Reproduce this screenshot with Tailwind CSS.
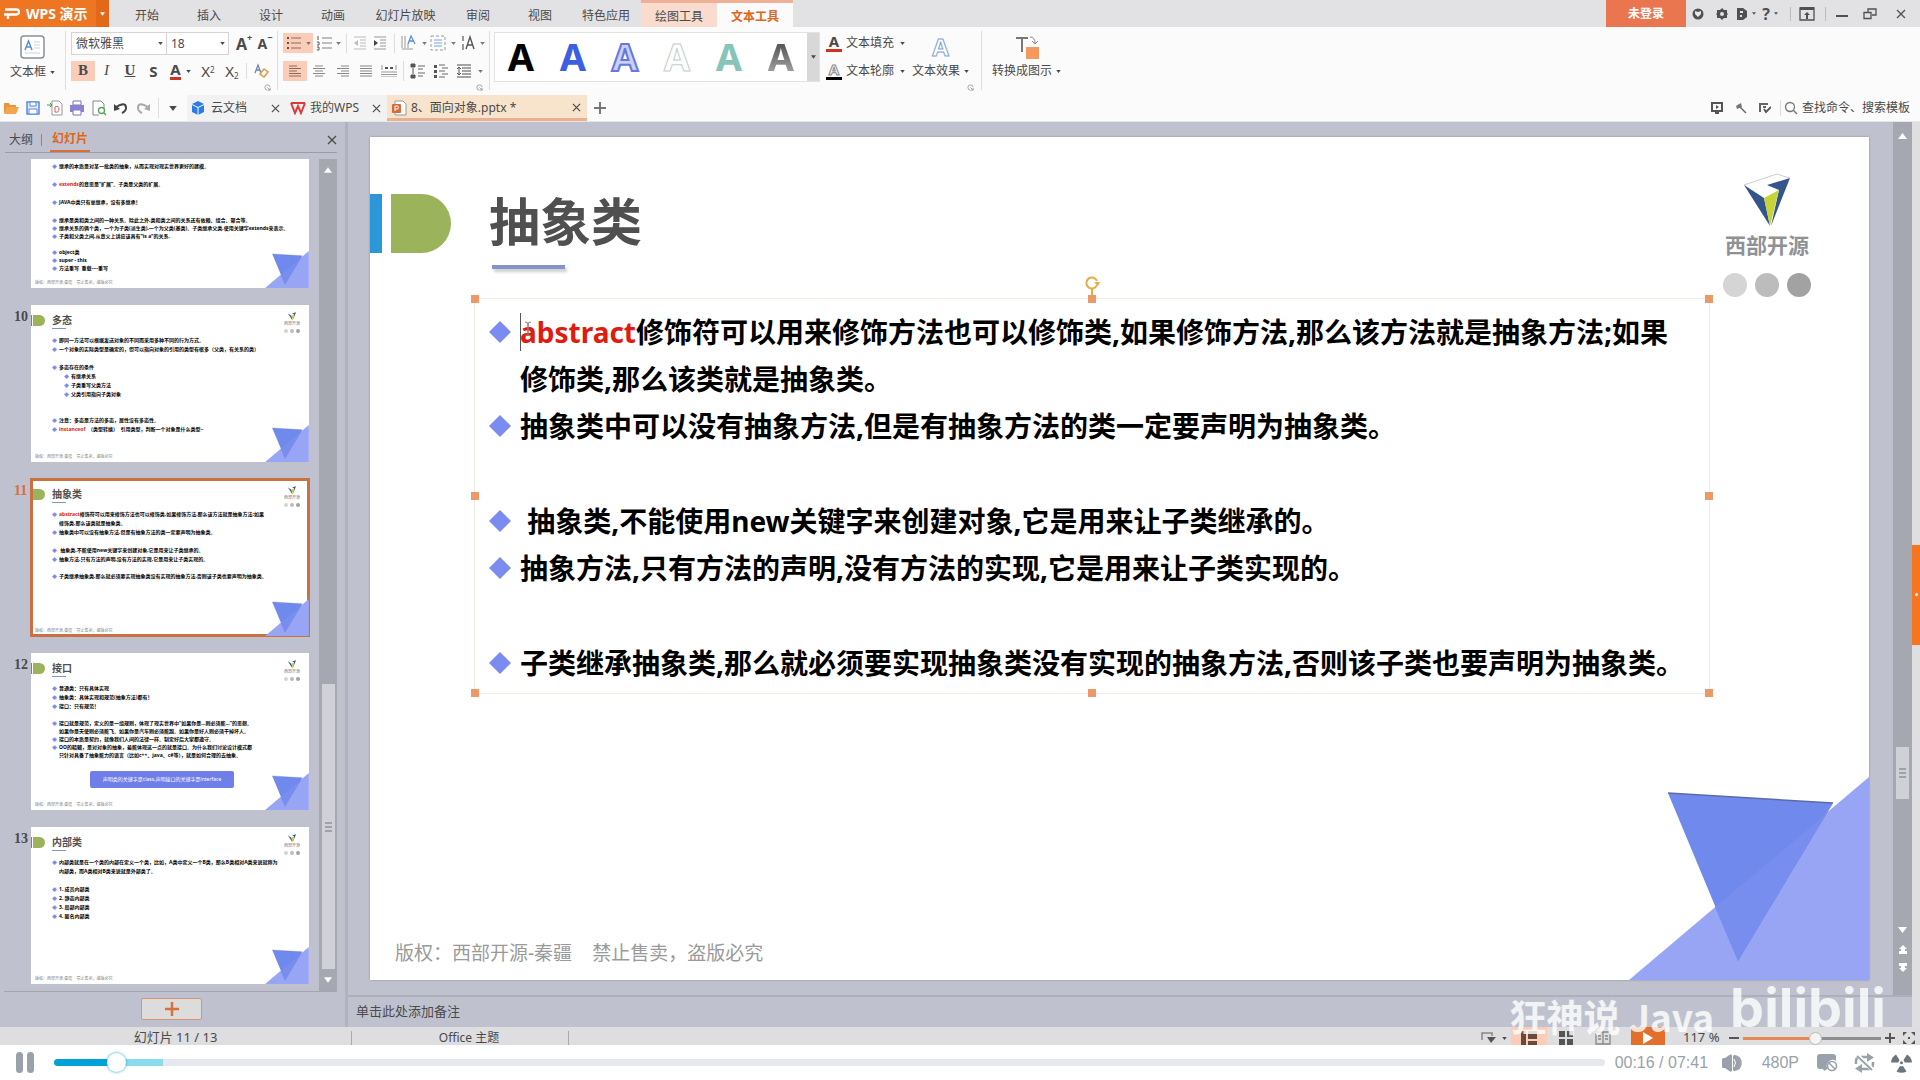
<!DOCTYPE html>
<html lang="zh-CN">
<head>
    <meta charset="UTF-8">
    <meta name="viewport" content="width=device-width, initial-scale=1.0">
    <title>8、面向对象.pptx - WPS 演示</title>
    <script src="https://cdn.jsdelivr.net/npm/@tailwindcss/browser@4"></script>
</head>
<body class="h-screen flex flex-col overflow-hidden bg-white text-xs text-[#4a4a4a] font-['Noto_Sans','Noto_Sans_CJK_SC',sans-serif]">

    <!-- Shared shapes -->
    <svg class="hidden">
        <symbol id="caret" viewBox="0 0 6 4"><path d="M0 0h6L3 4z" fill="currentColor"/></symbol>
        <symbol id="close" viewBox="0 0 10 10"><path d="M1 1l8 8M9 1l-8 8" stroke="currentColor" stroke-width="1.3"/></symbol>
        <symbol id="launcher" viewBox="0 0 8 8"><path d="M7 3.500A3 3 0 1 0 4 7M4 4l3 3M7 4.500V7H4.500" fill="none" stroke="currentColor"/></symbol>
        <symbol id="corner" viewBox="0 0 240 203">
            <path d="M0 203L240 0v203z" fill="#98a4f4"/>
            <path d="M39 16l165 10-95 158z" fill="#6f89ed"/>
            <path d="M86 130L190 43l14-17-95 158z" fill="#788eee"/>
            <path d="M39 16l165 10" stroke="#5c6ba5" stroke-width="1.500"/>
        </symbol>
        <symbol id="logo" viewBox="0 0 46 54">
            <path d="M0 12L33 1l12 4" fill="none" stroke="#c9cdd6" stroke-width="1"/>
            <path d="M0 12l20 13 6 28z" fill="#34558b"/>
            <path d="M46 5L23 12l12 5-8 36z" fill="#34558b"/>
            <path d="M20 25l15-8-9 36z" fill="#c6d437"/>
        </symbol>
    </svg>

    <!-- Title bar -->
    <header class="h-[27px] shrink-0 flex items-stretch bg-[#e2e2e5]">
        <button class="w-[109px] flex items-center bg-[#ee7522] text-white">
            <svg class="ml-1 w-4 h-3" viewBox="0 0 16 12"><path d="M1 1.500h11.500a2.500 2.500 0 0 1 0 5H4V11M0 6.500h5" fill="none" stroke="#fff" stroke-width="2.400"/></svg>
            <span class="ml-[6px] text-sm font-bold whitespace-nowrap">WPS 演示</span>
            <span class="ml-auto h-full w-[13px] flex items-center justify-center bg-[#e2681a]"><svg class="w-[5px] h-1"><use href="#caret"/></svg></span>
        </button>
        <nav class="ml-[7px] flex items-stretch *:flex *:items-center *:justify-center *:pt-1">
            <a href="#" class="w-[62px]">开始</a>
            <a href="#" class="w-[62px]">插入</a>
            <a href="#" class="w-[62px]">设计</a>
            <a href="#" class="w-[62px]">动画</a>
            <a href="#" class="w-[83px]">幻灯片放映</a>
            <a href="#" class="w-[62px]">审阅</a>
            <a href="#" class="w-[62px]">视图</a>
            <a href="#" class="w-[70px]">特色应用</a>
            <a href="#" class="w-[76px] bg-[#f9dccd] border-t-3 border-[#eeb096]">绘图工具</a>
            <a href="#" class="w-[76px] bg-[#fbfbfb] border-t-3 border-[#eeb096] text-[#e0651b] font-bold">文本工具</a>
        </nav>
        <div class="ml-auto flex items-center text-[#505050]">
            <button class="w-20 h-full bg-[#e9764e] text-white font-bold">未登录</button>
            <button class="w-6 flex justify-center" aria-label="皮肤"><svg class="w-3 h-3" viewBox="0 0 12 12"><circle cx="6" cy="6" r="5.500" fill="currentColor"/><path d="M3 3l3 1 3-1v3L6 9 3 6z" fill="#e8e8ea"/></svg></button>
            <button class="w-6 flex justify-center" aria-label="设置"><svg class="w-3 h-3" viewBox="0 0 12 12"><path d="M6 0l2 2h3v3l1 1-1 1v3H8l-2 2-2-2H1V7L0 6l1-1V2h3z" fill="currentColor"/><circle cx="6" cy="6" r="2" fill="#e2e2e5"/></svg></button>
            <button class="w-6 flex items-center justify-center gap-1" aria-label="文档"><svg class="w-3 h-3" viewBox="0 0 12 12"><path d="M1 0h6l4 3v6l-4 3H1zM4 3v2h3V3zM4 7v2h2V7z" fill="currentColor" fill-rule="evenodd"/></svg><svg class="w-1 h-[3px]"><use href="#caret"/></svg></button>
            <button class="w-6 flex items-center justify-center gap-1 text-base font-bold" aria-label="帮助">?<svg class="w-1 h-[3px]"><use href="#caret"/></svg></button>
            <span class="mx-2 h-[14px] w-px bg-[#bbb]"></span>
            <button aria-label="折叠功能区"><svg class="w-4 h-[14px]" viewBox="0 0 16 14"><path d="M1 1h14v12H1z" fill="none" stroke="currentColor" stroke-width="1.300"/><path d="M1 0h14v3H1zM8 5l3 3H9v4H7V8H5z" fill="currentColor"/></svg></button>
            <span class="mx-[10px] h-[14px] w-px bg-[#bbb]"></span>
            <button class="w-3 h-3 flex items-end pb-[3px]" aria-label="最小化"><span class="w-3 h-[2px] bg-[#505050]"></span></button>
            <button class="ml-[15px]" aria-label="还原"><svg class="w-[14px] h-3" viewBox="0 0 14 12"><path d="M1 4.500h7v6H1zM5 4V1h8v6H9" fill="none" stroke="currentColor" stroke-width="1.300"/></svg></button>
            <button class="ml-[19px] mr-[14px]" aria-label="关闭"><svg class="w-[10px] h-[10px]"><use href="#close"/></svg></button>
        </div>
    </header>

    <!-- Ribbon -->
    <section class="h-[68px] shrink-0 flex bg-[#fbfbfb] whitespace-nowrap *:shrink-0">
        <button class="w-[65px] pt-2 flex flex-col items-center gap-1">
            <svg class="w-[26px] h-[25px]" viewBox="0 0 26 25"><rect x="1" y="1" width="23" height="22" rx="3" fill="#fff" stroke="#8b9096" stroke-width="1.500"/><path d="M5 15L8.500 6 12 15M6 12h5" stroke="#5a8fd8" stroke-width="1.500" fill="none"/><path d="M14 7h6M14 10h6M14 13h6M5 18h15" stroke="#cfd3d8"/></svg>
            <span class="flex items-center gap-1">文本框<svg class="w-[5px] h-[3px]"><use href="#caret"/></svg></span>
        </button>
        <div class="mt-1 h-[59px] w-px bg-[#dedede]"></div>

        <div class="w-[211px] pl-[5px] pt-[5px] flex flex-col">
            <div class="flex h-[23px] items-center">
                <label class="relative h-full w-24 flex items-center">
                    <select aria-label="字体" class="appearance-none w-full h-full pl-1 bg-white border border-[#d4d4d4]"><option>微软雅黑</option></select>
                    <svg class="absolute right-1 w-[5px] h-[3px] pointer-events-none"><use href="#caret"/></svg>
                </label>
                <label class="relative h-full w-[62px] flex items-center">
                    <select aria-label="字号" class="appearance-none w-full h-full pl-1 bg-white border border-l-0 border-[#d4d4d4]"><option>18</option></select>
                    <svg class="absolute right-1 w-[5px] h-[3px] pointer-events-none"><use href="#caret"/></svg>
                </label>
                <button class="ml-1 w-[22px] text-base font-bold flex items-start justify-center leading-5" aria-label="增大字号">A<span class="text-[9px] leading-2">+</span></button>
                <button class="w-[20px] text-sm font-bold flex items-start justify-center leading-5" aria-label="减小字号">A<span class="text-[9px] leading-2">−</span></button>
            </div>
            <div class="mt-[6px] flex h-5 items-center text-[15px] font-['Liberation_Serif',serif]">
                <button class="w-6 h-full bg-[#fbcdb9] font-bold">B</button>
                <button class="w-[23px] italic">I</button>
                <button class="w-6 underline font-bold">U</button>
                <button class="w-[23px] font-bold font-['Noto_Sans',sans-serif]">S</button>
                <button class="w-[31px] flex items-center justify-center gap-[5px] font-bold font-['Noto_Sans',sans-serif]"><span class="leading-[15px] border-b-3 border-[#d0321f]">A</span><svg class="w-[5px] h-[3px]"><use href="#caret"/></svg></button>
                <button class="w-6 font-['Noto_Sans',sans-serif] leading-4">X<sup class="text-[8px]">2</sup></button>
                <button class="w-6 font-['Noto_Sans',sans-serif] leading-4">X<sub class="text-[8px]">2</sub></button>
                <span class="h-4 w-px ml-[2px] bg-[#dedede]"></span>
                <button class="ml-[6px]" aria-label="清除格式"><svg class="w-4 h-4" viewBox="0 0 16 16"><path d="M2 10L5 2l3 8M3 7h4" fill="none" stroke="#6a87ad" stroke-width="1.300"/><path d="M7 11l4-5 4 3-4 5z" fill="#fff" stroke="#e39a45" stroke-width="1.500"/></svg></button>
            </div>
            <button class="mt-[3px] mr-[6px] self-end" aria-label="字体设置"><svg class="w-[7px] h-[7px] text-[#999]"><use href="#launcher"/></svg></button>
        </div>
        <div class="mt-1 h-[59px] w-px bg-[#dedede]"></div>

        <div class="w-[211px] pl-[5px] pt-[6px] flex flex-col text-[#777]">
            <div class="flex h-5 items-center">
                <button class="w-[30px] h-full flex items-center justify-center gap-1 bg-[#fbcdb9]" aria-label="项目符号"><svg class="w-4 h-[14px]" viewBox="0 0 16 14"><path d="M5 2h10M5 7h10M5 12h10" stroke="#b08c7c" stroke-width="1.500"/><path d="M1 1h2v2H1zM1 6h2v2H1zM1 11h2v2H1z" fill="#6b5048"/></svg><svg class="w-[5px] h-[3px]"><use href="#caret"/></svg></button>
                <button class="w-[30px] flex items-center justify-center gap-1" aria-label="编号"><svg class="w-4 h-4" viewBox="0 0 16 16"><path d="M6 3h10M6 8h10M6 13h10" stroke="#aaa" stroke-width="1.300"/><path d="M2 1v4M1 7h2v3H1M1 12h2v3H1" stroke="#555" fill="none"/></svg><svg class="w-[5px] h-[3px]"><use href="#caret"/></svg></button>
                <span class="mx-[3px] h-5 w-px bg-[#dedede]"></span>
                <button class="w-5 flex justify-center" aria-label="减少缩进"><svg class="w-[14px] h-[14px]" viewBox="0 0 14 14"><path d="M1 1h12M7 4h6M7 7h6M7 10h6M1 13h12" stroke="#bbb"/><path d="M5 4v6L1 7z" fill="#bbb"/></svg></button>
                <button class="w-5 flex justify-center" aria-label="增加缩进"><svg class="w-[14px] h-[14px]" viewBox="0 0 14 14"><path d="M1 1h12M7 4h6M7 7h6M7 10h6M1 13h12" stroke="#999"/><path d="M1 4v6l4-3z" fill="#444"/></svg></button>
                <span class="mx-1 h-5 w-px bg-[#dedede]"></span>
                <button class="w-[29px] flex items-center justify-center gap-[5px]" aria-label="文字方向"><svg class="w-4 h-4" viewBox="0 0 16 16"><path d="M1 1v12M4 1v12M1 14h11M7 9v4" stroke="#999" fill="none"/><path d="M7 9l3-8 4 8M8 6h5" stroke="#5a8fd8" fill="none" stroke-width="1.300"/></svg><svg class="w-[5px] h-[3px]"><use href="#caret"/></svg></button>
                <button class="w-[30px] flex items-center justify-center gap-[5px]" aria-label="对齐文本"><svg class="w-4 h-4" viewBox="0 0 16 16"><path d="M1 1h14v14H1z" fill="none" stroke="#999" stroke-dasharray="3 2"/><path d="M4 5h8M4 8h8M4 11h8" stroke="#7aa3dc"/></svg><svg class="w-[5px] h-[3px]"><use href="#caret"/></svg></button>
                <button class="w-[30px] flex items-center justify-center gap-[5px]" aria-label="字符间距"><svg class="w-[14px] h-4" viewBox="0 0 14 16"><path d="M2 1v5M2 9v6" stroke="#666" stroke-width="1.300"/><path d="M5 14l4-12 4 12M6 10h6" fill="none" stroke="#555" stroke-width="1.400"/></svg><svg class="w-[5px] h-[3px]"><use href="#caret"/></svg></button>
            </div>
            <div class="mt-2 flex h-5 items-center">
                <button class="w-6 h-full flex items-center justify-center bg-[#fbcdb9]" aria-label="左对齐"><svg class="w-3 h-3" viewBox="0 0 12 12"><path d="M0 1h8M0 3.500h12M0 6h8M0 8.500h12M0 11h12" stroke="#8d6a5b"/></svg></button>
                <button class="w-6 flex justify-center" aria-label="居中"><svg class="w-3 h-3" viewBox="0 0 12 12"><path d="M2 1h8M0 3.500h12M2 6h8M0 8.500h12M2 11h8" stroke="#888"/></svg></button>
                <button class="w-[23px] flex justify-center" aria-label="右对齐"><svg class="w-3 h-3" viewBox="0 0 12 12"><path d="M4 1h8M0 3.500h12M4 6h8M0 8.500h12M4 11h8" stroke="#888"/></svg></button>
                <button class="w-[23px] flex justify-center" aria-label="两端对齐"><svg class="w-3 h-3" viewBox="0 0 12 12"><path d="M0 1h12M0 3.500h12M0 6h12M0 8.500h12M0 11h12" stroke="#888"/></svg></button>
                <button class="w-6 flex justify-center" aria-label="分散对齐"><svg class="w-4 h-3" viewBox="0 0 16 12"><path d="M1 0v5M15 0v5M0 7h16M0 9.500h16M0 12h16" stroke="#999"/><path d="M4 2h3v2H4zM9 2h3v2H9z" fill="#555"/></svg></button>
                <span class="mx-[2px] h-5 w-px bg-[#dedede]"></span>
                <button class="w-[23px] flex justify-center" aria-label="增加段落间距"><svg class="w-4 h-4" viewBox="0 0 16 16"><path d="M1 1h4v3H1zM1 12h4v3H1zM3 5v6" fill="#555" stroke="#555"/><path d="M8 3h7M8 6h5M8 10h7M8 13h5" stroke="#999" stroke-width="1.500"/></svg></button>
                <button class="w-[23px] flex justify-center" aria-label="减少段落间距"><svg class="w-4 h-4" viewBox="0 0 16 16"><path d="M1 2h3v3H1zM1 7h3v3H1zM1 12h3v3H1z" fill="#555"/><path d="M6 2h6M9 5h6M6 8h6M9 11h6M6 14h6" stroke="#999" stroke-width="1.300"/></svg></button>
                <button class="w-[36px] flex items-center justify-center gap-[7px]" aria-label="行距"><svg class="w-[14px] h-[14px]" viewBox="0 0 14 14"><path d="M0 1h14M5 4h9M5 7h9M5 10h9M0 13h14" stroke="#888" stroke-width="1.500"/><path d="M2 3v8M0 5l2-2 2 2M0 9l2 2 2-2" stroke="#555" fill="none"/></svg><svg class="w-[5px] h-[3px]"><use href="#caret"/></svg></button>
            </div>
            <button class="mt-[3px] mr-[6px] self-end" aria-label="段落设置"><svg class="w-[7px] h-[7px] text-[#999]"><use href="#launcher"/></svg></button>
        </div>
        <div class="mt-1 h-[59px] w-px bg-[#dedede]"></div>

        <!-- Text style presets -->
        <div class="ml-1 mt-[5px] h-[50px] flex bg-white border border-[#e2e2e2]">
            <div class="flex items-center pb-[3px] text-[38px] leading-none font-bold *:w-[52px] *:text-center">
                <button class="text-black">A</button>
                <button class="text-[#3b5fe0]">A</button>
                <button class="text-[#c9d0fa] [-webkit-text-stroke:2px_#6677dd]">A</button>
                <button class="text-white [-webkit-text-stroke:1px_#c3cfca]">A</button>
                <button class="text-[#86c5b8]">A</button>
                <button class="text-transparent bg-clip-text bg-linear-to-b from-[#444] to-[#aaa]">A</button>
            </div>
            <button class="w-3 flex items-center justify-center bg-[#d8d8d8]" aria-label="更多样式"><svg class="w-[5px] h-1"><use href="#caret"/></svg></button>
        </div>

        <div class="ml-[6px] pt-[6px] flex flex-col gap-2 *:h-5">
            <button class="flex items-center gap-1"><span class="w-4 text-center text-[15px] leading-[15px] font-bold border-b-3 border-[#d0321f]">A</span>文本填充<svg class="ml-[2px] w-[5px] h-[3px]"><use href="#caret"/></svg></button>
            <button class="flex items-center gap-1"><span class="w-4 text-center text-[15px] leading-[15px] font-bold text-white [-webkit-text-stroke:1px_#888] border-b-3 border-black">A</span>文本轮廓<svg class="ml-[2px] w-[5px] h-[3px]"><use href="#caret"/></svg></button>
        </div>
        <div class="ml-[2px] w-[67px] flex flex-col">
            <button class="pt-[6px] flex flex-col items-center">
                <span class="h-7 text-[24px] leading-7 font-bold text-white [-webkit-text-stroke:1px_#7ea2d8]">A</span>
                <span class="h-5 flex items-center gap-1">文本效果<svg class="w-[5px] h-[3px]"><use href="#caret"/></svg></span>
            </button>
            <button class="mt-[3px] self-end" aria-label="文本效果设置"><svg class="w-[7px] h-[7px] text-[#999]"><use href="#launcher"/></svg></button>
        </div>
        <div class="ml-[7px] mt-1 h-[59px] w-px bg-[#dedede]"></div>
        <button class="ml-[10px] pt-2 flex flex-col items-center">
            <svg class="h-[26px] w-[26px]" viewBox="0 0 26 26"><path d="M2 3h12M8 3v14" stroke="#777" stroke-width="2"/><path d="M16 2q5 0 5 6M18 6l3 3 3-3" stroke="#888" fill="none"/><rect x="12" y="12" width="13" height="12" fill="#f59a5c"/></svg>
            <span class="h-5 flex items-center gap-1">转换成图示<svg class="w-[5px] h-[3px]"><use href="#caret"/></svg></span>
        </button>
    </section>

    <!-- Quick access bar and document tabs -->
    <section class="h-[27px] shrink-0 flex items-stretch bg-[#fbfbfb] border-b border-[#e4e6ea] whitespace-nowrap">
        <div class="flex items-center *:w-[22px] *:flex *:justify-center">
            <button aria-label="打开"><svg class="w-4 h-[14px]" viewBox="0 0 16 14"><path d="M1 12V2h5l1 2h6v3" fill="#e9963a"/><path d="M1 13L4 6h12l-3 7z" fill="#f3a64a"/></svg></button>
            <button aria-label="保存"><svg class="w-[14px] h-[14px]" viewBox="0 0 14 14"><path d="M1 1h12v12H1z" fill="#dfeafb" stroke="#5a8ce0" stroke-width="1.500"/><path d="M4 1h6v4H4zM3 8h8v5H3z" fill="#fff" stroke="#5a8ce0"/></svg></button>
            <button aria-label="输出"><svg class="w-4 h-4" viewBox="0 0 16 16"><path d="M5 1h7l3 3v11H5z" fill="#fff" stroke="#999"/><path d="M8 7q4-2 4 2t-4 3z" fill="none" stroke="#d06060"/><path d="M0 5h5M3 3l2 2-2 2" stroke="#4c9a50" fill="none"/></svg></button>
            <button aria-label="打印"><svg class="w-4 h-4" viewBox="0 0 16 16"><path d="M4 1h8v4H4zM4 10h8v5H4z" fill="#fff" stroke="#7773c0"/><path d="M1 5h14v7h-3v-2H4v2H1z" fill="#8883cc"/></svg></button>
            <button aria-label="打印预览"><svg class="w-4 h-4" viewBox="0 0 16 16"><path d="M13 8V4l-3-3H2v14h6" fill="#fff" stroke="#888"/><circle cx="10.500" cy="10.500" r="3" fill="none" stroke="#55a455" stroke-width="1.300"/><path d="M13 13l2 2" stroke="#55a455" stroke-width="1.500"/></svg></button>
            <button aria-label="撤销"><svg class="w-[14px] h-3" viewBox="0 0 14 12"><path d="M2 5q10-6 10 1 0 3-4 5" fill="none" stroke="#444" stroke-width="2"/><path d="M0 2v7l6-2z" fill="#444"/></svg></button>
            <button aria-label="恢复"><svg class="w-[14px] h-3" viewBox="0 0 14 12"><path d="M12 5Q2-1 2 6q0 3 4 5" fill="none" stroke="#aaa" stroke-width="2"/><path d="M14 2v7L8 7z" fill="#aaa"/></svg></button>
        </div>
        <span class="ml-1 my-[3px] w-px bg-[#dedede]"></span>
        <button class="w-7 flex items-center justify-center" aria-label="更多"><svg class="w-2 h-[5px]"><use href="#caret"/></svg></button>
        <div class="w-[100px] pl-1 flex items-center gap-[6px] bg-[#f2f2f2]">
            <svg class="w-[14px] h-[14px]" viewBox="0 0 14 14"><path d="M7 0l6 3v8l-6 3-6-3V3z" fill="#2d7be8"/><path d="M1 3.500l6 3 6-3M7 6.500V14" stroke="#fff" fill="none"/></svg>
            <a href="#">云文档</a>
            <button class="ml-auto mr-[7px]" aria-label="关闭云文档"><svg class="w-[9px] h-[9px]"><use href="#close"/></svg></button>
        </div>
        <div class="w-[100px] pl-[3px] flex items-center gap-1 bg-[#f2f2f2]">
            <svg class="w-4 h-[14px]" viewBox="0 0 16 14"><path d="M1 2h14M1 2l4 10 3-7 3 7 4-10" fill="none" stroke="#dc3b3b" stroke-width="2"/></svg>
            <a href="#">我的WPS</a>
            <button class="ml-auto mr-[6px]" aria-label="关闭我的WPS"><svg class="w-[9px] h-[9px]"><use href="#close"/></svg></button>
        </div>
        <div class="w-[200px] pl-1 pt-[2px] flex items-center gap-1 bg-[#f8e3cd] border-b-3 border-[#eab08f]">
            <svg class="w-4 h-4" viewBox="0 0 16 16"><path d="M4 1h8l3 3v11H4z" fill="#fff" stroke="#999"/><rect x="1" y="4" width="9" height="9" rx="1" fill="#d8693a"/><path d="M4 11V6h2a1.500 1.500 0 0 1 0 3H4" stroke="#fff" fill="none"/></svg>
            <a href="#">8、面向对象.pptx *</a>
            <button class="ml-auto mr-[6px]" aria-label="关闭文档"><svg class="w-[9px] h-[9px]"><use href="#close"/></svg></button>
        </div>
        <button class="w-[26px] flex items-center justify-center" aria-label="新建标签"><svg class="w-3 h-3" viewBox="0 0 12 12"><path d="M6 0v12M0 6h12" stroke="#777" stroke-width="2"/></svg></button>

        <div class="ml-auto pr-2 flex items-center">
            <button class="w-6 flex justify-center" aria-label="演示"><svg class="w-3 h-3" viewBox="0 0 12 12"><path d="M1 1h10v8H1z" fill="none" stroke="#555" stroke-width="2"/><path d="M5 3l3 2-3 2zM4 10h4v2H4z" fill="#555"/></svg></button>
            <button class="w-6 flex justify-center" aria-label="美化"><svg class="w-3 h-3" viewBox="0 0 12 12"><path d="M3 3l8 8" stroke="#666" stroke-width="1.500"/><path d="M1 4l5-3 1 4-5 2z" fill="#777"/></svg></button>
            <button class="w-6 flex justify-center" aria-label="批注"><svg class="w-3 h-3" viewBox="0 0 12 12"><path d="M0 2h9M1 2v8M4 5h3" stroke="#666" stroke-width="2"/><path d="M5 7l2 3 5-5" stroke="#555" stroke-width="1.800" fill="none"/></svg></button>
            <span class="mx-[3px] h-4 w-px bg-[#dedede]"></span>
            <label for="search" class="mr-1"><svg class="w-[14px] h-[14px]" viewBox="0 0 14 14"><circle cx="6" cy="6" r="4.500" fill="none" stroke="#777" stroke-width="1.300"/><path d="M9 9l4 4" stroke="#777" stroke-width="1.500"/></svg></label>
            <input id="search" type="text" aria-label="查找命令" placeholder="查找命令、搜索模板" class="w-[110px] outline-none placeholder:text-[#4a4a4a]">
        </div>
    </section>

    <main class="relative flex-1 min-h-0 flex bg-[#bfc2ce]">
        <!-- Slide thumbnails -->
        <aside class="w-[348px] shrink-0 flex flex-col border-r-3 border-[#b0b3be]">
            <div class="ml-[5px] mr-2 h-[31px] shrink-0 flex items-center pt-[6px] border-b border-[#9a9da8]">
                <a href="#" class="pl-1">大纲</a>
                <span class="mx-2 h-3 w-px bg-[#888]"></span>
                <a href="#" class="h-full px-[2px] flex items-center border-b-2 border-[#dd6d35] text-[#e0651b] font-bold">幻灯片</a>
                <button class="ml-auto" aria-label="关闭窗格"><svg class="w-[10px] h-[10px]"><use href="#close"/></svg></button>
            </div>
            <div class="mt-[6px] mr-2 ml-1 flex-1 min-h-0 flex border-b border-[#a3a6b1]">
                <ol id="thumbs" class="flex-1 min-w-0 overflow-hidden flex flex-col justify-end gap-[17px] pb-[7px]"></ol>
                <div class="w-[18px] shrink-0 flex flex-col items-center py-2 bg-[#a6a8b1] text-white">
                    <svg class="w-2 h-[6px] rotate-180 shrink-0"><use href="#caret"/></svg>
                    <div class="mt-auto mb-2 w-[13px] h-[285px] flex flex-col items-center justify-center gap-[2px] bg-[#cfd1d7] *:w-[7px] *:h-[2px] *:bg-[#a0a2aa]"><i></i><i></i><i></i></div>
                    <svg class="w-2 h-[6px] shrink-0"><use href="#caret"/></svg>
                </div>
            </div>
            <div class="h-[35px] shrink-0 pt-[6px] pr-[2px] flex items-start justify-center">
                <button class="w-[61px] h-[22px] flex items-center justify-center bg-[#dcdcdd] border border-[#d9936f] rounded-xs" aria-label="新建幻灯片"><svg class="w-[14px] h-[14px]" viewBox="0 0 14 14"><path d="M7 0v14M0 7h14" stroke="#d5703f" stroke-width="2.500"/></svg></button>
            </div>
        </aside>

        <div class="flex-1 min-w-0 flex flex-col">
            <div class="flex-1 min-h-0 flex border-b-2 border-[#adb0bb]">
                <div class="flex-1 min-w-0 pt-[15px] pl-[22px] pr-6 pb-[15px] flex">
                    <!-- Current slide -->
                    <article class="relative flex-1 flex flex-col bg-white shadow-[0_0_2px_#888a95]">
                        <header class="h-[161px] flex items-start">
                            <div class="mt-[57px] w-3 h-[59px] bg-[#2b97d9]"></div>
                            <div class="mt-[57px] ml-[9px] w-[60px] h-[59px] rounded-r-full bg-[#9bb35b]"></div>
                            <div class="mt-[57px] ml-[38px]">
                                <h1 class="h-[59px] text-[51px] leading-[54px] font-bold text-[#505050]">抽象类</h1>
                                <div class="mt-3 ml-[3px] w-[73px] h-1 bg-[#8095c8] shadow-[2px_3px_3px_#0003]"></div>
                            </div>
                            <div class="ml-auto mr-[58px] pt-9 flex flex-col items-center">
                                <svg class="w-[46px] h-[54px]"><use href="#logo"/></svg>
                                <span class="mt-[6px] text-[21px] leading-6 font-bold text-[#8f9295]">西部开源</span>
                                <div class="mt-4 flex gap-2 *:w-6 *:h-6 *:rounded-full"><i class="bg-[#d5d5d5]"></i><i class="bg-[#bcbcbc]"></i><i class="bg-[#a2a2a2]"></i></div>
                            </div>
                        </header>
                        <div class="relative ml-[104px] mr-[159px] pt-[10px] pb-[6px] pl-[14px] pr-5 border border-[#f8e9de] text-[28px] leading-[47px] font-bold text-black">
                            <ul>
                                <li class="flex gap-[9px]"><svg class="mt-3 w-[22px] h-[22px] shrink-0" viewBox="0 0 22 22"><path d="M11 0l11 11-11 11L0 11z" fill="#7b8cf0"/></svg><p><span class="text-[#e01b10]">abstract</span>修饰符可以用来修饰方法也可以修饰类,如果修饰方法,那么该方法就是抽象方法;如果修饰类,那么该类就是抽象类。</p></li>
                                <li class="flex gap-[9px] mb-12"><svg class="mt-3 w-[22px] h-[22px] shrink-0" viewBox="0 0 22 22"><path d="M11 0l11 11-11 11L0 11z" fill="#7b8cf0"/></svg><p>抽象类中可以没有抽象方法,但是有抽象方法的类一定要声明为抽象类。</p></li>
                                <li class="flex gap-[9px]"><svg class="mt-3 w-[22px] h-[22px] shrink-0" viewBox="0 0 22 22"><path d="M11 0l11 11-11 11L0 11z" fill="#7b8cf0"/></svg><p>&nbsp;抽象类,不能使用new关键字来创建对象,它是用来让子类继承的。</p></li>
                                <li class="flex gap-[9px] mb-12"><svg class="mt-3 w-[22px] h-[22px] shrink-0" viewBox="0 0 22 22"><path d="M11 0l11 11-11 11L0 11z" fill="#7b8cf0"/></svg><p>抽象方法,只有方法的声明,没有方法的实现,它是用来让子类实现的。</p></li>
                                <li class="flex gap-[9px]"><svg class="mt-3 w-[22px] h-[22px] shrink-0" viewBox="0 0 22 22"><path d="M11 0l11 11-11 11L0 11z" fill="#7b8cf0"/></svg><p>子类继承抽象类,那么就必须要实现抽象类没有实现的抽象方法,否则该子类也要声明为抽象类。</p></li>
                            </ul>
                            <!-- Caret, pointer and selection handles -->
                            <i class="absolute left-[45px] top-[14px] w-px h-[38px] bg-[#555]"></i>
                            <svg class="absolute left-[49px] top-[22px] w-2 h-4" viewBox="0 0 8 16"><path d="M1 1q3 0 3 2v10q0 2-3 2M7 1Q4 1 4 3v10q0 2 3 2" fill="none" stroke="#8a7a78"/></svg>
                            <i class="absolute -left-1 -top-1 size-2 bg-[#ec9867]"></i>
                            <i class="absolute left-1/2 -top-1 size-2 -translate-x-1/2 bg-[#ec9867]"></i>
                            <i class="absolute -right-1 -top-1 size-2 bg-[#ec9867]"></i>
                            <i class="absolute -left-1 top-1/2 size-2 -translate-y-1/2 bg-[#ec9867]"></i>
                            <i class="absolute -right-1 top-1/2 size-2 -translate-y-1/2 bg-[#ec9867]"></i>
                            <i class="absolute -left-1 -bottom-1 size-2 bg-[#ec9867]"></i>
                            <i class="absolute left-1/2 -bottom-1 size-2 -translate-x-1/2 bg-[#ec9867]"></i>
                            <i class="absolute -right-1 -bottom-1 size-2 bg-[#ec9867]"></i>
                            <svg class="absolute left-1/2 -top-6 w-4 h-5 -translate-x-1/2" viewBox="0 0 16 20"><path d="M13 10a5.500 5.500 0 1 1 0-4M8 14v6" fill="none" stroke="#e5ac45" stroke-width="2"/><path d="M10 7h6l-2 4z" fill="#e5ac45"/></svg>
                        </div>
                        <footer class="mt-auto pl-[25px] pb-[14px] flex gap-5 text-[19px] leading-[26px] text-[#9a9a9a]">
                            <span>版权：西部开源-秦疆</span><span>禁止售卖，盗版必究</span>
                        </footer>
                        <svg class="absolute right-0 bottom-0 w-60 h-[203px]"><use href="#corner"/></svg>
                    </article>
                </div>
                <div class="w-[19px] pt-[11px] pb-[23px] flex flex-col items-center bg-[#a6a8b1] text-white">
                    <svg class="w-[9px] h-[6px] rotate-180 shrink-0"><use href="#caret"/></svg>
                    <div class="mt-auto mb-[128px] w-[13px] h-[52px] flex flex-col items-center justify-center gap-[2px] bg-[#cfd1d7] *:w-[7px] *:h-[2px] *:bg-[#a0a2aa]"><i></i><i></i><i></i></div>
                    <svg class="w-[9px] h-[6px] shrink-0"><use href="#caret"/></svg>
                    <svg class="mt-3 w-2 h-[9px] shrink-0" viewBox="0 0 8 9"><path d="M4 0l4 4H6v2h2v3H0V6h2V4H0z" fill="#fff"/></svg>
                    <svg class="mt-[9px] w-2 h-[9px] shrink-0" viewBox="0 0 8 9"><path d="M4 9l4-4H6V3h2V0H0v3h2v2H0z" fill="#fff"/></svg>
                </div>
            </div>
            <div class="h-[30px] shrink-0 flex items-center pl-2">
                <input type="text" aria-label="备注" placeholder="单击此处添加备注" class="flex-1 outline-none placeholder:text-[#4a4a4a] text-[13px]">
            </div>
        </div>
        <div class="w-2 shrink-0 bg-[#dfdfe2] flex flex-col justify-center">
            <button class="mt-10 h-[100px] w-2 flex items-center justify-center bg-[#f9741f]" aria-label="展开任务窗格"><i class="size-[3px] rounded-full bg-white"></i></button>
        </div>

        <!-- Video watermark -->
        <div class="absolute right-[34px] -bottom-2 z-10 flex items-end gap-4 leading-none text-white/80 pointer-events-none">
            <span class="text-[37px] font-bold font-['Noto_Sans_CJK_SC',sans-serif]">狂神说 Java</span>
            <span class="text-[54px] font-bold font-['Inter',sans-serif]">bilibili</span>
        </div>
    </main>

    <!-- Status bar -->
    <div class="h-[18px] shrink-0 overflow-hidden flex items-start bg-[#dedddf] whitespace-nowrap text-[13px]">
        <div class="h-[22px] w-full flex items-center">
            <span class="w-[351px] shrink-0 text-center">幻灯片 11 / 13</span>
            <span class="h-[14px] w-px bg-[#aaa]"></span>
            <span class="w-[216px] pl-[18px] text-center text-xs">Office 主题</span>
            <span class="h-[14px] w-px bg-[#aaa]"></span>
            <div class="ml-auto flex items-center">
                <button class="w-[30px] flex items-center gap-[5px]" aria-label="备注视图"><svg class="w-4 h-3" viewBox="0 0 16 12"><path d="M1 8V1h10v3" fill="none" stroke="#888" stroke-width="1.500"/><path d="M6 5h9l-5 6z" fill="#555"/></svg><svg class="w-[5px] h-[3px]"><use href="#caret"/></svg></button>
                <button class="w-9 h-[22px] flex items-center justify-center bg-[#fbcdb9]" aria-label="普通视图"><svg class="w-4 h-[14px]" viewBox="0 0 16 14"><path d="M0 0h5v14H0zM7 0h9v8H7zM7 10h9v4H7z" fill="#6b4a3e"/></svg></button>
                <button class="w-[38px] flex justify-center" aria-label="幻灯片浏览"><svg class="w-[14px] h-[14px]" viewBox="0 0 14 14"><path d="M0 0h6v6H0zM8 0h6v6H8zM0 8h6v6H0zM8 8h6v6H8z" fill="#555"/></svg></button>
                <button class="w-9 flex justify-center" aria-label="阅读视图"><svg class="w-4 h-[14px]" viewBox="0 0 16 14"><path d="M1 1h14v12H1zM8 1v12M3 5h3M10 5h3M3 8h3M10 8h3" fill="none" stroke="#888" stroke-width="1.300"/></svg></button>
                <button class="ml-[10px] w-[34px] h-[22px] flex items-center justify-center bg-[#e2702a]" aria-label="放映"><svg class="w-[10px] h-3" viewBox="0 0 10 12"><path d="M0 0l10 6-10 6z" fill="#fff"/></svg></button>
                <span class="w-[64px] pl-[18px]">117 %</span>
                <button class="w-[10px] h-[2px] bg-[#555]" aria-label="缩小"></button>
                <input type="range" aria-label="显示比例" min="0" max="100" value="53" class="ml-1 w-[138px] h-[3px] appearance-none bg-[linear-gradient(90deg,#e58a55_53%,#8d8d8d_53%)] [&::-webkit-slider-thumb]:appearance-none [&::-webkit-slider-thumb]:size-[13px] [&::-webkit-slider-thumb]:rounded-full [&::-webkit-slider-thumb]:bg-[#f4f4f4] [&::-webkit-slider-thumb]:border [&::-webkit-slider-thumb]:border-[#bbb]">
                <button class="ml-1" aria-label="放大"><svg class="w-[10px] h-[10px]" viewBox="0 0 10 10"><path d="M5 0v10M0 5h10" stroke="#555" stroke-width="2"/></svg></button>
                <button class="ml-2 mr-[5px]" aria-label="适应窗口"><svg class="w-3 h-3" viewBox="0 0 12 12"><path d="M0 0h4L0 4zM12 0v4L8 0zM0 12V8l4 4zM12 12H8l4-4zM5 5h2v2H5z" fill="#555"/></svg></button>
            </div>
        </div>
    </div>

    <!-- Video player controls -->
    <div class="h-[35px] shrink-0 flex items-center bg-white text-[#99a2aa] text-base font-['Liberation_Sans',sans-serif]">
        <button class="ml-4 flex gap-1" aria-label="暂停"><i class="w-[7px] h-[21px] rounded-full bg-[#99a2aa]"></i><i class="w-[7px] h-[21px] rounded-full bg-[#99a2aa]"></i></button>
        <input type="range" aria-label="播放进度" min="0" max="461" value="16" class="ml-5 flex-1 min-w-0 h-[7px] rounded-full appearance-none bg-[linear-gradient(90deg,#00a1d6_4%,#8adced_4%,#8adced_7%,#e5e9ef_7%)] [&::-webkit-slider-thumb]:appearance-none [&::-webkit-slider-thumb]:size-[19px] [&::-webkit-slider-thumb]:rounded-full [&::-webkit-slider-thumb]:bg-white [&::-webkit-slider-thumb]:shadow-[0_0_3px_#00a1d6]">
        <span class="ml-[10px] w-[92px] whitespace-nowrap">00:16 / 07:41</span>
        <button class="ml-[15px]" aria-label="音量"><svg class="w-5 h-[18px]" viewBox="0 0 20 18"><path d="M0 5q0-1 2-1h1l5-3.500q2-.500 2 1v15q0 1.500-2 1L3 14H2q-2 0-2-1z" fill="#99a2aa"/><path d="M11 1.500a7.500 7.500 0 0 1 0 15z" fill="#99a2aa"/><path d="M12 5q3 4 0 8" fill="none" stroke="#fff"/><path d="M12 1.500q7 1 7 7.500t-7 7.500" fill="none" stroke="#99a2aa" stroke-width="1.500"/></svg></button>
        <button class="ml-5">480P</button>
        <button class="ml-[18px]" aria-label="关闭弹幕"><svg class="w-[21px] h-5" viewBox="0 0 21 20"><path d="M3 1h13q3 0 3 3v4a6 6 0 0 0-8.500 8L7 18l-1-2H3q-3 0-3-3V4q0-3 3-3z" fill="#99a2aa"/><circle cx="15" cy="13" r="4.500" fill="#fff" stroke="#99a2aa" stroke-width="1.600"/><path d="M12 10l6 6" stroke="#99a2aa" stroke-width="1.600"/></svg></button>
        <button class="ml-4" aria-label="循环播放"><svg class="w-[21px] h-5" viewBox="0 0 21 20"><path d="M2 11V8q0-4 5-4h7M19 9v2q0 5-5 5H7" fill="none" stroke="#99a2aa" stroke-width="2.600"/><path d="M13 0l7 4.500L13 9zM8 11v9l-7-4.500z" fill="#99a2aa"/><path d="M3 2l16 15" stroke="#fff" stroke-width="4"/><path d="M3 3l15 14" stroke="#99a2aa" stroke-width="1.800"/></svg></button>
        <button class="ml-4 mr-2" aria-label="宽屏"><svg class="w-[21px] h-5" viewBox="0 0 21 20"><path d="M5 1.500l3.500 5.500q-1 1-1 2.500H0Q.500 4 5 1.500zM16 1.500L12.500 7q1 1 1 2.500H21Q20.500 4 16 1.500zM9 13q1.500.700 3 0l3.500 5.500q-5 2.500-10 0z" fill="#6d757a"/><circle cx="10.500" cy="9.800" r="1.500" fill="#6d757a"/></svg></button>
    </div>

    <script>
        // t: text, gap: blank space after the line, sub: nested bullet, red: coloured keyword in front
        // the first slide is scrolled half out of view, so it has no number or title
        const slides = [
            { no: '', title: '', tight: true, lines: [
                { t: '继承的本质是对某一批类的抽象，从而实现对现实世界更好的建模。', gap: 10 },
                { red: 'extends', t: '的意思是“扩展”。子类是父类的扩展。', gap: 10 },
                { t: 'JAVA中类只有单继承，没有多继承！', gap: 10 },
                { t: '继承是类和类之间的一种关系。除此之外,类和类之间的关系还有依赖、组合、聚合等。' },
                { t: '继承关系的俩个类，一个为子类(派生类),一个为父类(基类)。子类继承父类,使用关键字extends来表示。' },
                { t: '子类和父类之间,从意义上讲应该具有"is a"的关系.', gap: 8 },
                { t: 'object类' },
                { t: 'super - this' },
                { t: '方法重写  重载----重写' }
            ] },
            { no: 10, title: '多态', lines: [
                { t: '即同一方法可以根据发送对象的不同而采用多种不同的行为方式。' },
                { t: '一个对象的实际类型是确定的，但可以指向对象的引用的类型有很多（父类，有关系的类）', gap: 9 },
                { t: '多态存在的条件' },
                { t: '有继承关系', sub: true },
                { t: '子类重写父类方法', sub: true },
                { t: '父类引用指向子类对象', sub: true, gap: 17 },
                { t: '注意：多态是方法的多态，属性没有多态性。' },
                { red: 'instanceof', t: '  （类型转换）  引用类型，判断一个对象是什么类型~' }
            ] },
            { no: 11, title: '抽象类', active: true, lines: [
                { red: 'abstract', t: '修饰符可以用来修饰方法也可以修饰类,如果修饰方法,那么该方法就是抽象方法;如果\n修饰类,那么该类就是抽象类。' },
                { t: '抽象类中可以没有抽象方法,但是有抽象方法的类一定要声明为抽象类。', gap: 9 },
                { t: ' 抽象类,不能使用new关键字来创建对象,它是用来让子类继承的。' },
                { t: '抽象方法,只有方法的声明,没有方法的实现,它是用来让子类实现的。', gap: 8 },
                { t: '子类继承抽象类,那么就必须要实现抽象类没有实现的抽象方法,否则该子类也要声明为抽象类。' }
            ] },
            { no: 12, title: '接口', tight: true, note: '声明类的关键字是class,声明接口的关键字是interface', lines: [
                { t: '普通类：只有具体实现', gap: 1 },
                { t: '抽象类：具体实现和规范(抽象方法)都有！', gap: 1 },
                { t: '接口：只有规范！', gap: 9 },
                { t: '接口就是规范，定义的是一组规则，体现了现实世界中“如果你是…则必须能…”的思想。\n如果你是天使则必须能飞。如果你是汽车则必须能跑。如果你是好人则必须干掉坏人。' },
                { t: '接口的本质是契约，就像我们人间的法律一样。制定好后大家都遵守。' },
                { t: 'OO的精髓，是对对象的抽象，最能体现这一点的就是接口。为什么我们讨论设计模式都\n只针对具备了抽象能力的语言（比如c++、java、c#等），就是如何合理的去抽象。' }
            ] },
            { no: 13, title: '内部类', lines: [
                { t: '内部类就是在一个类的内部在定义一个类，比如，A类中定义一个B类，那么B类相对A类来说就称为内部类，而A类相对B类来说就是外部类了。', gap: 9 },
                { t: '1. 成员内部类' },
                { t: '2. 静态内部类' },
                { t: '3. 局部内部类' },
                { t: '4. 匿名内部类' }
            ] }
        ];

        function renderLine(line) {
            return `<li class="flex gap-[2px] ${line.sub ? 'pl-3' : ''}" style="margin-bottom:${line.gap || 0}px">
                <span class="text-[#7b8cf0]">◆</span>
                <p class="whitespace-pre-wrap break-all">${line.red ? `<span class="text-[#e01b10]">${line.red}</span>` : ''}${line.t}</p>
            </li>`;
        }

        function renderHead(s) {
            if (!s.title) return '<div class="h-[31px] shrink-0"></div>';
            return `<div class="h-[31px] shrink-0 flex">
                <i class="mt-[10px] w-px h-[11px] bg-[#2b97d9]"></i>
                <i class="mt-[10px] ml-px w-3 h-[11px] rounded-r-full bg-[#9bb35b]"></i>
                <div class="ml-[7px] mt-[9px] text-[10px] leading-3 font-bold text-[#505050]">${s.title}<i class="block mt-[2px] w-[14px] h-px bg-[#8095c8]"></i></div>
                <div class="ml-auto mr-[9px] mt-[6px] flex flex-col items-center">
                    <svg class="w-2 h-[10px]"><use href="#logo"/></svg>
                    <span class="text-[4px] leading-[6px] text-[#777]">西部开源</span>
                    <div class="mt-[2px] flex gap-[2px] *:size-1 *:rounded-full"><i class="bg-[#d5d5d5]"></i><i class="bg-[#bcbcbc]"></i><i class="bg-[#a2a2a2]"></i></div>
                </div>
            </div>`;
        }

        function renderSlide(s) {
            return `<li class="flex shrink-0">
                <span class="w-[27px] pl-[10px] pt-1 shrink-0 text-sm leading-4 font-bold font-['Liberation_Serif',serif] ${s.active ? 'text-[#dc6d3c]' : ''}">${s.no}</span>
                <a href="#" class="relative w-[278px] h-[157px] flex flex-col bg-white ${s.active ? 'outline-3 -outline-offset-2 outline-[#cb7040]' : ''}">
                    ${renderHead(s)}
                    <ul class="pl-[21px] text-[5px] font-bold text-black ${s.tight ? 'pr-4 leading-[8px]' : 'pr-7 leading-[9px]'}">${s.lines.map(renderLine).join('')}</ul>
                    ${s.note ? `<div class="ml-auto mt-3 mr-[75px] w-[144px] h-[17px] flex items-center justify-center rounded-xs bg-[#6f7ee8] text-white text-[5px]">${s.note}</div>` : ''}
                    <span class="mt-auto pl-1 pb-[2px] text-[4px] leading-[6px] text-[#888] whitespace-pre">版权：西部开源-秦疆    禁止售卖，盗版必究</span>
                    <svg class="absolute right-0 bottom-0 w-11 h-[37px]"><use href="#corner"/></svg>
                </a>
            </li>`;
        }

        document.getElementById('thumbs').innerHTML = slides.map(renderSlide).join('');
    </script>
</body>
</html>
